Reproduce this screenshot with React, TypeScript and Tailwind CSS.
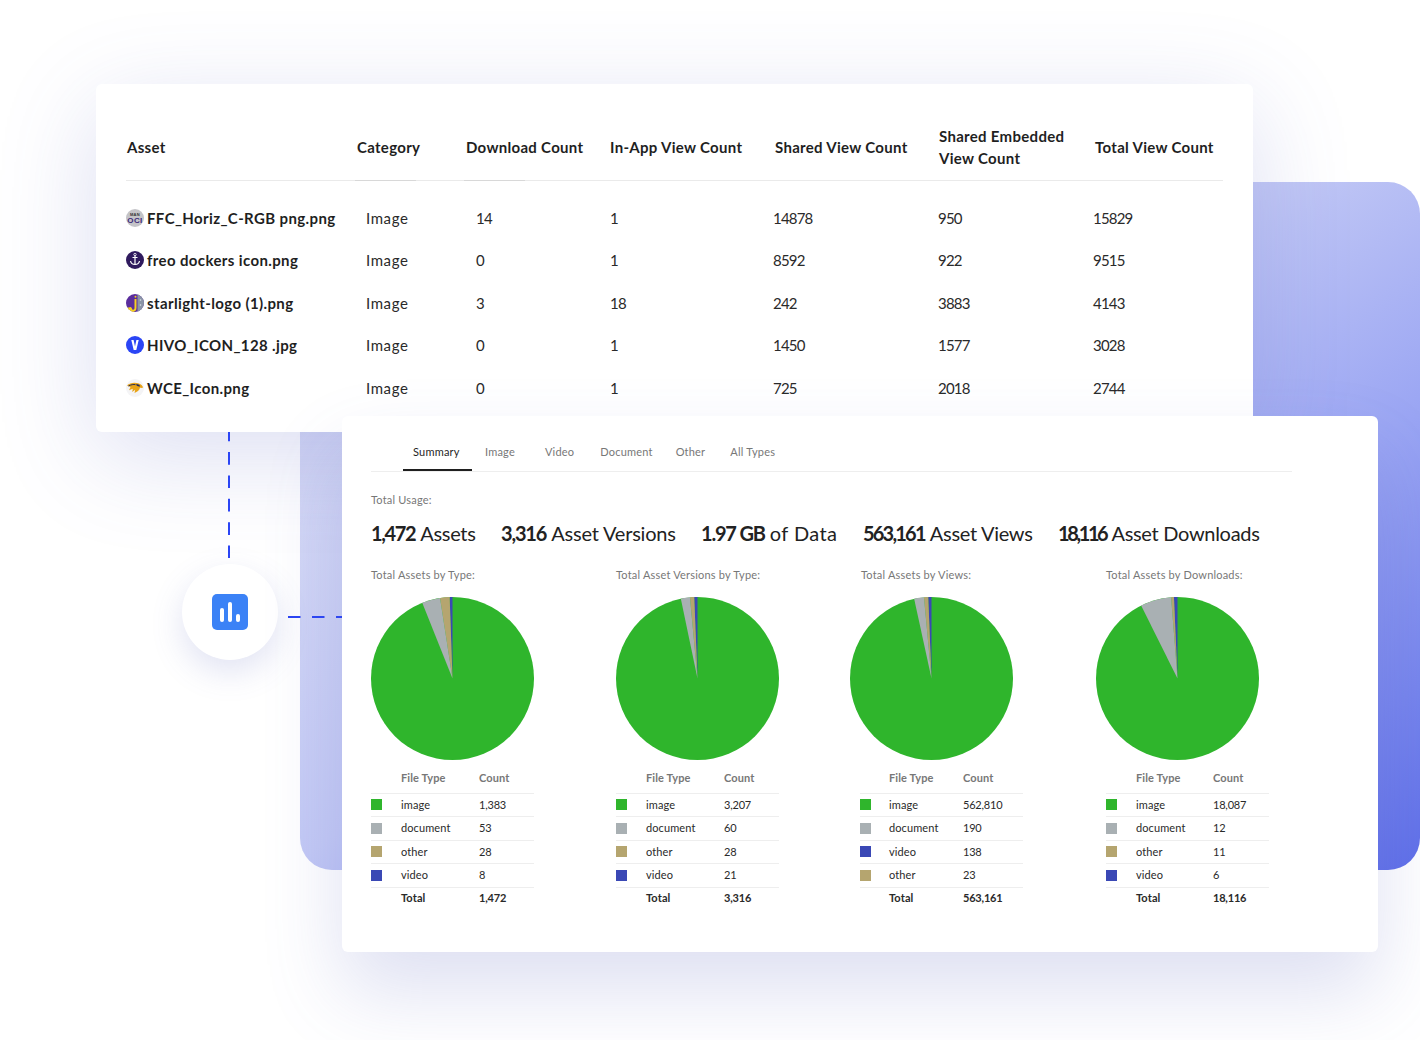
type Row = { swatch: string; type: string; count: string };
type Chart = {
  label: string;
  pieShift: string;
  tableShift: string;
  typeCol: string;
  slices: { color: string; deg: number }[];
  rows: Row[];
  total: string;
};

const GREEN = '#2fb52c';
const GRAY = '#a9b0b3';
const TAN = '#b5a56f';
const BLUE = '#3a48b5';

const charts: Chart[] = [
  {
    label: 'Total Assets by Type:',
    pieShift: 'ml-0',
    tableShift: 'ml-0',
    typeCol: 'grid-cols-[30px_78px_1fr]',
    slices: [
      { color: BLUE, deg: 2 },
      { color: TAN, deg: 6.8 },
      { color: GRAY, deg: 13 },
    ],
    rows: [
      { swatch: GREEN, type: 'image', count: '1,383' },
      { swatch: GRAY, type: 'document', count: '53' },
      { swatch: TAN, type: 'other', count: '28' },
      { swatch: BLUE, type: 'video', count: '8' },
    ],
    total: '1,472',
  },
  {
    label: 'Total Asset Versions by Type:',
    pieShift: 'ml-0',
    tableShift: 'ml-0',
    typeCol: 'grid-cols-[30px_78px_1fr]',
    slices: [
      { color: BLUE, deg: 2.3 },
      { color: TAN, deg: 3 },
      { color: GRAY, deg: 6.5 },
    ],
    rows: [
      { swatch: GREEN, type: 'image', count: '3,207' },
      { swatch: GRAY, type: 'document', count: '60' },
      { swatch: TAN, type: 'other', count: '28' },
      { swatch: BLUE, type: 'video', count: '21' },
    ],
    total: '3,316',
  },
  {
    label: 'Total Assets by Views:',
    pieShift: '-ml-[11px]',
    tableShift: '-ml-px',
    typeCol: 'grid-cols-[29px_74px_1fr]',
    slices: [
      { color: BLUE, deg: 2.3 },
      { color: TAN, deg: 3 },
      { color: GRAY, deg: 7 },
    ],
    rows: [
      { swatch: GREEN, type: 'image', count: '562,810' },
      { swatch: GRAY, type: 'document', count: '190' },
      { swatch: BLUE, type: 'video', count: '138' },
      { swatch: TAN, type: 'other', count: '23' },
    ],
    total: '563,161',
  },
  {
    label: 'Total Assets by Downloads:',
    pieShift: '-ml-[10px]',
    tableShift: 'ml-0',
    typeCol: 'grid-cols-[30px_77px_1fr]',
    slices: [
      { color: BLUE, deg: 2.5 },
      { color: TAN, deg: 2 },
      { color: GRAY, deg: 22 },
    ],
    rows: [
      { swatch: GREEN, type: 'image', count: '18,087' },
      { swatch: GRAY, type: 'document', count: '12' },
      { swatch: TAN, type: 'other', count: '11' },
      { swatch: BLUE, type: 'video', count: '6' },
    ],
    total: '18,116',
  },
];

const assets = [
  { icon: 'ffc', name: 'FFC_Horiz_C-RGB png.png', cells: ['Image', '14', '1', '14878', '950', '15829'] },
  { icon: 'freo', name: 'freo dockers icon.png', cells: ['Image', '0', '1', '8592', '922', '9515'] },
  { icon: 'star', name: 'starlight-logo (1).png', cells: ['Image', '3', '18', '242', '3883', '4143'] },
  { icon: 'hivo', name: 'HIVO_ICON_128 .jpg', cells: ['Image', '0', '1', '1450', '1577', '3028'] },
  { icon: 'wce', name: 'WCE_Icon.png', cells: ['Image', '0', '1', '725', '2018', '2744'] },
];

const cellPad = [
  'pl-[9px] tracking-[0.6px]',
  'pl-[10px] tracking-[-0.8px]',
  'pl-0 tracking-[-0.8px]',
  'pl-0 tracking-[-0.8px]',
  'pl-0 tracking-[-0.8px]',
  'pl-0 tracking-[-0.8px]',
];

function AssetIcon({ kind }: { kind: string }) {
  if (kind === 'ffc') {
    return (
      <svg viewBox="0 0 18 18" className="w-[18px] h-[18px] shrink-0">
        <circle cx="9" cy="9" r="9" fill="#c4c4c8" />
        <text x="9" y="6.5" textAnchor="middle" fontSize="4" fontWeight="700" fill="#333" fontFamily="Liberation Sans">MAN</text>
        <text x="9" y="14" textAnchor="middle" fontSize="8" fontWeight="700" fill="#3b2a7a" fontFamily="Liberation Sans">OCI</text>
      </svg>
    );
  }
  if (kind === 'freo') {
    return (
      <svg viewBox="0 0 18 18" className="w-[18px] h-[18px] shrink-0">
        <circle cx="9" cy="9" r="9" fill="#2f1a5e" />
        <path d="M9 4.5v9M6.5 6.5h5M4.5 10c.5 2.5 2.5 3.5 4.5 3.5s4-1 4.5-3.5" fill="none" stroke="#fff" strokeWidth="1.2" />
        <circle cx="9" cy="3.5" r="1.2" fill="none" stroke="#fff" strokeWidth="0.8" />
      </svg>
    );
  }
  if (kind === 'star') {
    return (
      <svg viewBox="0 0 18 18" className="w-[18px] h-[18px] shrink-0">
        <defs>
          <clipPath id="star-clip">
            <circle cx="9" cy="9" r="9" />
          </clipPath>
        </defs>
        <g clipPath="url(#star-clip)">
          <rect width="18" height="18" fill="#5a2d9c" />
          <rect x="11.5" width="6.5" height="18" fill="#8a94a6" />
          <path d="M0 14l5-1 3 5H0z" fill="#f5d020" />
          <path d="M9.5 5v9c0 2-1.5 3-4 3" fill="none" stroke="#f5d020" strokeWidth="2" />
          <circle cx="9.5" cy="2.8" r="1" fill="#f5d020" />
          <circle cx="14.5" cy="6" r="0.8" fill="#dfe3ea" />
          <circle cx="14.5" cy="11" r="0.8" fill="#dfe3ea" />
        </g>
      </svg>
    );
  }
  if (kind === 'hivo') {
    return (
      <svg viewBox="0 0 18 18" className="w-[18px] h-[18px] shrink-0">
        <circle cx="9" cy="9" r="9" fill="#2b45f5" />
        <path d="M5.3 4h2.3L9 10.5 10.4 4h2.3L10.3 14H7.7z" fill="#fff" />
      </svg>
    );
  }
  return (
    <svg viewBox="0 0 18 18" className="w-[18px] h-[18px] shrink-0">
      <circle cx="9" cy="9" r="9" fill="#f4f4f6" />
      <path d="M1 6.5C4 3.5 9 3 13 4.500c2 .7 3.500 2 4.200 4-1.200.5-2.200.5-3.200.3-.5 2.700-3 4.200-5.500 5.200l.7-3.200-3 2.200.6-3.200-3.800 1.500L4.500 8z" fill="#e8a317" />
      <path d="M10 5.500c1.500-.5 3.200 0 4.200 1.700-1.500.5-3.200.2-4.200-1.700z" fill="#1f2a5c" />
      <path d="M2.500 7c2.500-1.300 5-1.800 7-1.300" fill="none" stroke="#1f2a5c" strokeWidth="1" />
    </svg>
  );
}

function Pie({ slices }: { slices: { color: string; deg: number }[] }) {
  const r = 81.5;
  const point = (a: number) => {
    const rad = (a * Math.PI) / 180;
    return `${r - r * Math.sin(rad)} ${r - r * Math.cos(rad)}`;
  };
  let from = 0;
  return (
    <svg viewBox="0 0 163 163" className="w-[163px] h-[163px] block">
      <circle cx={r} cy={r} r={r} fill={GREEN} />
      {slices.map((s) => {
        const to = from + s.deg;
        const d = `M${r} ${r}L${point(from)}A${r} ${r} 0 0 0 ${point(to)}Z`;
        from = to;
        return <path key={s.color} d={d} fill={s.color} />;
      })}
    </svg>
  );
}

function ChartBlock({ chart }: { chart: Chart }) {
  return (
    <div>
      <div className="text-[11px] leading-[14px] tracking-[0.2px] text-[#777]">{chart.label}</div>
      <div className={`mt-[14.5px] ${chart.pieShift}`}>
        <Pie slices={chart.slices} />
      </div>
      <div className={`mt-[10px] w-[163px] text-[11px] tracking-[0.1px] text-[#2a2a2a] ${chart.tableShift}`}>
        <div className={`grid ${chart.typeCol} h-[24px] pb-[6px] items-center border-b border-[#eeeeee] font-bold text-[#777]`}>
          <span />
          <span>File Type</span>
          <span>Count</span>
        </div>
        {chart.rows.map((row) => (
          <div key={row.type} className={`grid ${chart.typeCol} h-[23.5px] items-center border-b border-[#eeeeee]`}>
            <span className="w-[11px] h-[11px]" style={{ backgroundColor: row.swatch }} />
            <span>{row.type}</span>
            <span className="tracking-[-0.2px]">{row.count}</span>
          </div>
        ))}
        <div className={`grid ${chart.typeCol} h-[23.5px] pb-[2px] items-center font-bold`}>
          <span />
          <span>Total</span>
          <span className="tracking-[-0.2px]">{chart.total}</span>
        </div>
      </div>
    </div>
  );
}

export default function App() {
  const tabs = ['Image', 'Video', 'Document', 'Other', 'All Types'];
  const tabPad = ['ml-[13px]', 'ml-[30px]', 'ml-[26px]', 'ml-[23px]', 'ml-[25px]'];
  const stats = [
    { n: '1,472', unit: 'Assets', w: 'w-[130px]', nt: 'tracking-[-1.4px]', ut: 'tracking-[-0.3px]' },
    { n: '3,316', unit: 'Asset Versions', w: 'w-[200px]', nt: 'tracking-[-1.2px]', ut: 'tracking-[-0.2px]' },
    { n: '1.97 GB', unit: 'of Data', w: 'w-[162px]', nt: 'tracking-[-1.2px]', ut: 'tracking-[0.4px]' },
    { n: '563,161', unit: 'Asset Views', w: 'w-[195px]', nt: 'tracking-[-1.8px]', ut: 'tracking-[-0.3px]' },
    { n: '18,116', unit: 'Asset Downloads', w: 'w-[220px]', nt: 'tracking-[-2.4px]', ut: 'tracking-[-0.3px]' },
  ];
  const headers = [
    ['Asset', 'pl-px'],
    ['Category', 'pl-0'],
    ['Download Count', 'pl-0'],
    ['In-App View Count', 'pl-0'],
    ['Shared View Count', 'pl-[2px]'],
    ['Shared Embedded View Count', 'pl-px'],
    ['Total View Count', 'pl-[2px]'],
  ];

  return (
    <div className="relative w-[1420px] h-[1040px] overflow-hidden bg-white font-['Lato','Liberation_Sans',sans-serif]">
      {/* backdrop */}
      <div className="absolute left-[300px] top-[182px] w-[1120px] h-[688px] rounded-[32px] bg-[linear-gradient(145deg,#e4e6f6_0%,#c3c9f5_46%,#9aa5f3_69%,#5f6fe9_100%)]" />

      {/* assets table card */}
      <div className="absolute left-[96px] top-[84px] w-[1157px] h-[348px] rounded-md bg-white pl-[30px] pr-[30px] shadow-[0_24px_100px_rgba(80,90,190,0.2)]">
        <div className="relative grid grid-cols-[231px_109px_144px_163px_165px_155px_130px] h-[97px] pt-[30px] items-center border-b border-[#eaeaea] text-[15px] leading-[22px] font-bold tracking-[0.3px] text-[#1f1f1f]">
          {headers.map(([title, pad]) => (
            <div key={title} className={pad}>{title}</div>
          ))}
          <span className="absolute left-[229px] bottom-[-1px] w-[61px] h-px bg-[#d8d8d8]" />
          <span className="absolute left-[338px] bottom-[-1px] w-[61px] h-px bg-[#d8d8d8]" />
        </div>
        <div className="pt-[15.5px]">
          {assets.map((a) => (
            <div key={a.name} className="grid grid-cols-[231px_109px_144px_163px_165px_155px_130px] h-[42.5px] items-center text-[15px] text-[#2a2a2a]">
              <div className="flex items-center gap-[3px] font-bold tracking-[0.38px] text-[#1f1f1f]">
                <AssetIcon kind={a.icon} />
                <span className="whitespace-nowrap">{a.name}</span>
              </div>
              {a.cells.map((c, i) => (
                <div key={i} className={cellPad[i]}>{c}</div>
              ))}
            </div>
          ))}
        </div>
      </div>

      {/* connectors */}
      <svg className="absolute left-[220px] top-[432px] w-[20px] h-[130px]" viewBox="0 0 20 130">
        <line x1="9" y1="-3.4" x2="9" y2="126" stroke="#2b45f5" strokeWidth="2" strokeDasharray="12.7 10.7" />
      </svg>
      <svg className="absolute left-[288px] top-[612px] w-[54px] h-[10px]" viewBox="0 0 54 10">
        <line x1="0" y1="5" x2="54" y2="5" stroke="#2b45f5" strokeWidth="2" strokeDasharray="12.5 11.5" />
      </svg>

      {/* round chart badge */}
      <div className="absolute left-[182px] top-[564px] w-[96px] h-[96px] rounded-full bg-white flex items-center justify-center shadow-[0_12px_32px_rgba(90,100,190,0.18)]">
        <div className="w-[36px] h-[36px] rounded-[5px] bg-[#3b82f6] flex items-center justify-center">
          <svg viewBox="0 0 36 36" className="w-[36px] h-[36px]">
            <rect x="8" y="14" width="4" height="14" rx="2" fill="#fff" />
            <rect x="16" y="8" width="4" height="20" rx="2" fill="#fff" />
            <rect x="24" y="20" width="4" height="8" rx="2" fill="#fff" />
          </svg>
        </div>
      </div>

      {/* summary card */}
      <div className="absolute left-[342px] top-[416px] w-[1036px] h-[536px] rounded-md bg-white pl-[29px] shadow-[0_40px_80px_rgba(90,100,190,0.2)]">
        <div className="w-[921px] h-[56px] border-b border-[#eeeeee] pt-[20px] flex items-start text-[11px] leading-[32px] tracking-[0.2px] text-[#777]">
          <div className="ml-[32px] px-[10px] w-[69px] h-[35px] border-b-2 border-[#1f1f1f] text-[#1f1f1f] whitespace-nowrap">Summary</div>
          {tabs.map((t, i) => (
            <div key={t} className={tabPad[i]}>{t}</div>
          ))}
        </div>
        <div className="mt-[21px] text-[11px] leading-[14px] tracking-[0.2px] text-[#777]">Total Usage:</div>
        <div className="mt-[12px] flex text-[20px] leading-[28px] text-[#222]">
          {stats.map((s) => (
            <div key={s.unit} className={`${s.w} whitespace-nowrap`}>
              <b className={s.nt}>{s.n}</b> <span className={s.ut}>{s.unit}</span>
            </div>
          ))}
        </div>
        <div className="mt-[21px] grid grid-cols-[245px_245px_245px_245px]">
          {charts.map((c) => (
            <ChartBlock key={c.label} chart={c} />
          ))}
        </div>
      </div>
    </div>
  );
}
